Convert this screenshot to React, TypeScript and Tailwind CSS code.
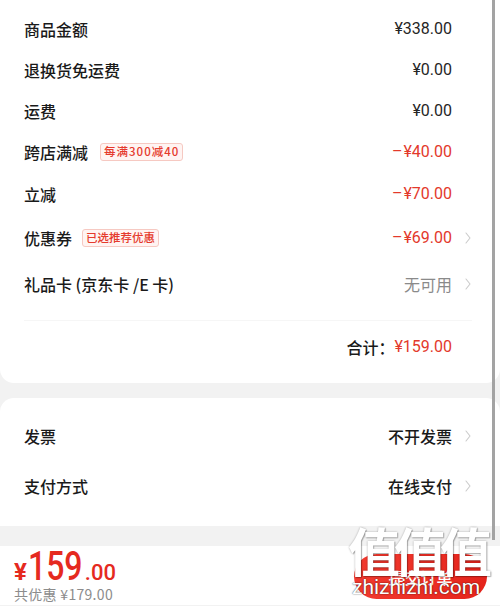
import React from "react";

const Chevron = () => (
  <svg width="8" height="12" viewBox="0 0 8 12" className="shrink-0">
    <polyline points="2,1 6,6 2,11" fill="none" stroke="#cbcbcb" strokeWidth="1.1" strokeLinecap="round" strokeLinejoin="round" />
  </svg>
);

const Badge = ({ children, className = "" }: { children: React.ReactNode; className?: string }) => (
  <span
    className={`inline-flex h-[18px] items-center rounded-[3px] border border-[#f6c9c2] bg-[#fff4f2] px-[3px] text-[11.5px] font-medium leading-none text-[#e53a2c] ${className}`}
  >
    {children}
  </span>
);

type RowProps = {
  label: React.ReactNode;
  value: React.ReactNode;
  chevron?: boolean;
  h: string;
};

const Row = ({ label, value, chevron, h }: RowProps) => (
  <div className={`flex items-center ${h}`}>
    <div className="flex flex-1 items-center text-[16px] font-medium text-[#1a1a1a]">{label}</div>
    <div className="flex items-center text-[16px]">{value}</div>
    <div className="flex w-[20px] justify-end">{chevron ? <Chevron /> : null}</div>
  </div>
);

const Num = ({ children, red }: { children: React.ReactNode; red?: boolean }) => (
  <span className={red ? "text-[#e3392b]" : "text-[#262626]"} style={{ fontFamily: "Roboto, sans-serif" }}>
    {children}
  </span>
);

const Neg = ({ children }: { children: React.ReactNode }) => (
  <span className="text-[#e3392b]" style={{ fontFamily: "Roboto, sans-serif" }}>
    <span className="mr-[1px]">–</span>
    {children}
  </span>
);

export default function App() {
  return (
    <div
      className="relative h-[606px] w-[500px] overflow-hidden bg-[#f2f2f2]"
      style={{ fontFamily: '"Noto Sans CJK SC", Roboto, sans-serif' }}
    >
      {/* card 1 */}
      <div className="rounded-b-[14px] bg-white pl-[24px] pr-[28px] pt-[8px]">
        <Row h="h-[41px]" label="商品金额" value={<Num>¥338.00</Num>} />
        <Row h="h-[41px]" label="退换货免运费" value={<Num>¥0.00</Num>} />
        <Row h="h-[41px]" label="运费" value={<Num>¥0.00</Num>} />
        <Row
          h="h-[42px]"
          label={
            <>
              跨店满减<Badge className="ml-[12px] tracking-[1px]">每满300减40</Badge>
            </>
          }
          value={<Neg>¥40.00</Neg>}
        />
        <Row h="h-[41px]" label="立减" value={<Neg>¥70.00</Neg>} />
        <Row
          h="h-[47px]"
          label={
            <>
              优惠券<Badge className="ml-[10px]">已选推荐优惠</Badge>
            </>
          }
          value={<Neg>¥69.00</Neg>}
          chevron
        />
        <Row h="h-[46px]" label="礼品卡 (京东卡 /E 卡)" value={<span className="text-[#8a8a8a]">无可用</span>} chevron />
        <div className="mt-[13px] flex h-[52px] items-center justify-end border-t border-[#f6f6f6] pr-[20px] text-[16px]">
          <span className="font-medium text-[#1a1a1a]">合计：</span>
          <Num red>¥159.00</Num>
        </div>
        <div className="h-[11px]" />
      </div>

      {/* card 2 */}
      <div className="mt-[15px] rounded-t-[14px] bg-white pb-[15px] pl-[24px] pr-[28px] pt-[13px]">
        <Row h="h-[50px]" label="发票" value={<span className="font-medium text-[#1a1a1a]">不开发票</span>} chevron />
        <Row h="h-[50px]" label="支付方式" value={<span className="font-medium text-[#1a1a1a]">在线支付</span>} chevron />
      </div>

      {/* bottom bar */}
      <div className="mt-[20px] flex h-[59px] items-start justify-between bg-white pl-[14px] pr-[13px]">
        <div className="flex flex-col">
          <div className="flex h-[41px] items-baseline leading-none text-[#e52a1f]" style={{ fontFamily: "Roboto, sans-serif" }}>
            <span className="text-[24px] font-bold">¥</span>
            <span className="ml-[1px] -mr-[15px] inline-block origin-left scale-x-[0.78] text-[41px] font-medium">159</span>
            <span className="ml-[2px] text-[22px] font-medium">.00</span>
          </div>
          <div className="text-[14px] leading-[14px] tracking-[0.3px] text-[#8c8c8c]">共优惠 ¥179.00</div>
        </div>
        <div className="mt-[8px] flex h-[45px] w-[133px] items-center justify-center rounded-full bg-gradient-to-r from-[#f23a2f] to-[#e5231b] text-[16px] font-medium text-white">
          提交订单
        </div>
      </div>

      {/* watermark */}
      <div className="pointer-events-none absolute left-[348px] top-[524px] flex w-[144px] flex-col items-start">
        <div
          className="h-[53px] text-[52px] font-bold leading-none tracking-[-6px] text-white"
          style={{ textShadow: "0 0 2px rgba(0,0,0,0.35), 1px 1px 1px rgba(0,0,0,0.25)" }}
        >
          值值值
        </div>
        <div
          className="ml-[4px] text-[21px] leading-none text-white"
          style={{ fontFamily: "Roboto, sans-serif", textShadow: "0 0 1px rgba(0,0,0,0.6), 0 0 2px rgba(0,0,0,0.4)" }}
        >
          zhizhizhi.com
        </div>
      </div>

      {/* scrollbar */}
      <div className="pointer-events-none absolute left-[492px] top-0 h-[540px] w-[3px] bg-[#a3a3a3]" />
    </div>
  );
}
